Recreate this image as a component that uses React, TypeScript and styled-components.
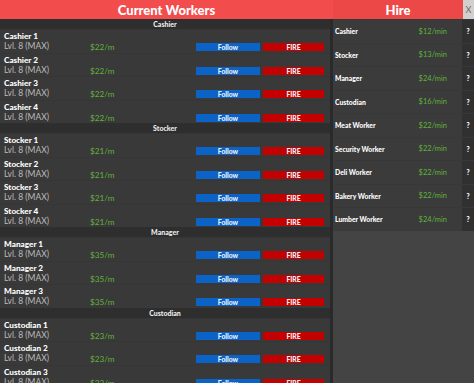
import { FC } from "react";
import styled, { createGlobalStyle } from "styled-components";

const GlobalStyle = createGlobalStyle`
  html, body {
    margin: 0;
    padding: 0;
    background: #444444;
    overflow: hidden;
  }
`;

interface Section {
  title: string;
  wage: string;
  count: number;
}

const sections: Section[] = [
  { title: "Cashier", wage: "$22/m", count: 4 },
  { title: "Stocker", wage: "$21/m", count: 4 },
  { title: "Manager", wage: "$35/m", count: 3 },
  { title: "Custodian", wage: "$23/m", count: 3 },
];

const hireList = [
  { name: "Cashier", price: "$12/min" },
  { name: "Stocker", price: "$13/min" },
  { name: "Manager", price: "$24/min" },
  { name: "Custodian", price: "$16/min" },
  { name: "Meat Worker", price: "$22/min" },
  { name: "Security Worker", price: "$22/min" },
  { name: "Deli Worker", price: "$22/min" },
  { name: "Bakery Worker", price: "$22/min" },
  { name: "Lumber Worker", price: "$24/min" },
];

const FONT = `"Lato", "Open Sans", sans-serif`;

const Screen = styled.div`
  display: flex;
  width: 474px;
  height: 383px;
  overflow: hidden;
  background: #444444;
  font-family: ${FONT};
`;

const WorkersPanel = styled.div`
  width: 333px;
  display: flex;
  flex-direction: column;
  background: #333333;
`;

const Header = styled.div<{ $tone: string }>`
  height: 19px;
  flex: 0 0 19px;
  display: flex;
  align-items: center;
  justify-content: center;
  background: ${(p) => p.$tone};
  color: #ffffff;
  font-size: 13px;
  font-weight: 900;
`;

const Body = styled.div`
  flex: 1;
  display: flex;
  overflow: hidden;
`;

const List = styled.div`
  width: 330px;
  display: flex;
  flex-direction: column;
`;

const ScrollTrack = styled.div`
  width: 3px;
  background: #2a2a2a;
`;

const SectionTitle = styled.div`
  height: 10px;
  flex: 0 0 10px;
  display: flex;
  align-items: center;
  justify-content: center;
  background: #2e2e2e;
  color: #ececec;
  font-size: 7px;
  font-weight: 900;
`;

const WorkerRow = styled.div`
  height: 23.5px;
  flex: 0 0 23.5px;
  box-sizing: border-box;
  display: grid;
  grid-template-columns: 86px 106px 64px 64px;
  align-items: end;
  padding: 0 0 4.5px 4px;
  background: #393939;
  border-top: 1px solid #363636;
`;

const Info = styled.div`
  display: flex;
  flex-direction: column;
  align-self: start;
  padding-top: 1px;
`;

const Name = styled.span`
  color: #ffffff;
  font-size: 8.2px;
  font-weight: 900;
  line-height: 10px;
`;

const Level = styled.span`
  color: #bcbcbc;
  font-size: 8.5px;
  line-height: 10px;
`;

const Wage = styled.span`
  color: #62b23c;
  font-size: 8.2px;
  line-height: 10px;
  margin-bottom: -1px;
`;

const ActionButton = styled.div<{ $bg: string; $gap?: number }>`
  height: 8px;
  margin-left: ${(p) => p.$gap ?? 0}px;
  display: flex;
  align-items: center;
  justify-content: center;
  background: ${(p) => p.$bg};
  color: #eef2f8;
  font-size: 6.8px;
  font-weight: 900;
`;

const HirePanel = styled.div`
  width: 141px;
  display: flex;
  flex-direction: column;
`;

const HireHeader = styled.div`
  display: flex;
`;

const CloseBox = styled.div`
  width: 11px;
  height: 19px;
  display: flex;
  align-items: center;
  justify-content: center;
  background: #d3cfcf;
  color: #6a6a6a;
  font-size: 9px;
`;

const HireRow = styled.div`
  height: 23.5px;
  box-sizing: border-box;
  display: flex;
  align-items: center;
  background: #3b3b3b;
  border-top: 1px solid #383838;
`;

const HireName = styled.span`
  flex: 1;
  padding-left: 2px;
  color: #ffffff;
  font-size: 6.8px;
  font-weight: 900;
`;

const HirePrice = styled.span`
  width: 40px;
  padding-right: 15px;
  text-align: right;
  color: #5fb43a;
  font-size: 7.5px;
`;

const HelpCell = styled.span`
  width: 12px;
  align-self: stretch;
  display: flex;
  align-items: center;
  justify-content: center;
  background: #303030;
  color: #ffffff;
  font-size: 6.8px;
  font-weight: 900;
`;

const App: FC = () => {
  return (
    <>
      <GlobalStyle />
      <Screen>
        <WorkersPanel>
          <Header $tone="#f24c4c">Current Workers</Header>
          <Body>
            <List>
              {sections.map((s) => (
                <div key={s.title} style={{ display: "contents" }}>
                  <SectionTitle>{s.title}</SectionTitle>
                  {Array.from({ length: s.count }, (_, i) => (
                    <WorkerRow key={i}>
                      <Info>
                        <Name>
                          {s.title} {i + 1}
                        </Name>
                        <Level>Lvl. 8 (MAX)</Level>
                      </Info>
                      <Wage>{s.wage}</Wage>
                      <ActionButton $bg="#0b63c8">Follow</ActionButton>
                      <ActionButton $bg="#c40101" $gap={3}>
                        FIRE
                      </ActionButton>
                    </WorkerRow>
                  ))}
                </div>
              ))}
            </List>
            <ScrollTrack />
          </Body>
        </WorkersPanel>
        <HirePanel>
          <HireHeader>
            <Header $tone="#ec4848" style={{ flex: 1 }}>
              Hire
            </Header>
            <CloseBox>X</CloseBox>
          </HireHeader>
          {hireList.map((h) => (
            <HireRow key={h.name}>
              <HireName>{h.name}</HireName>
              <HirePrice>{h.price}</HirePrice>
              <HelpCell>?</HelpCell>
            </HireRow>
          ))}
        </HirePanel>
      </Screen>
    </>
  );
};

export default App;
